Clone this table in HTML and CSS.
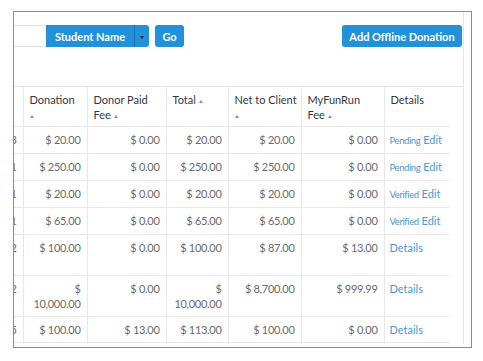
FILE: index.html
```html
<!DOCTYPE html>
<html lang="en">
<head>
    <meta charset="UTF-8">
    <title>Donations</title>
    <link rel="stylesheet" href="styles.css">
</head>
<body>
    <div class="frame">
        <div class="page">
            <div class="toolbar">
                <div class="search">
                    <input type="text" class="search-input">
                    <button class="btn btn-main">Student Name</button>
                    <button class="btn btn-caret"><span class="caret"></span></button>
                    <button class="btn btn-go">Go</button>
                </div>
                <button class="btn btn-add">Add Offline Donation</button>
            </div>
            <div class="grid-wrap">
                <table class="grid">
                    <colgroup>
                        <col style="width: 70px">
                        <col style="width: 64px">
                        <col style="width: 79px">
                        <col style="width: 62px">
                        <col style="width: 73px">
                        <col style="width: 83px">
                        <col style="width: 65px">
                    </colgroup>
                    <thead>
                        <tr>
                            <th>Date <span class="sort"></span></th>
                            <th>Donation <span class="sort"></span></th>
                            <th>Donor Paid Fee <span class="sort"></span></th>
                            <th>Total <span class="sort"></span></th>
                            <th><span class="nowrap">Net to Client</span> <span class="sort"></span></th>
                            <th>MyFunRun Fee <span class="sort"></span></th>
                            <th>Details</th>
                        </tr>
                    </thead>
                    <tbody>
                        <tr>
                            <td>3/14/2013</td>
                            <td>$ 20.00</td>
                            <td>$ 0.00</td>
                            <td>$ 20.00</td>
                            <td>$ 20.00</td>
                            <td>$ 0.00</td>
                            <td><a href="#" class="status">Pending</a> <a href="#" class="link">Edit</a></td>
                        </tr>
                        <tr>
                            <td>3/12/2011</td>
                            <td>$ 250.00</td>
                            <td>$ 0.00</td>
                            <td>$ 250.00</td>
                            <td>$ 250.00</td>
                            <td>$ 0.00</td>
                            <td><a href="#" class="status">Pending</a> <a href="#" class="link">Edit</a></td>
                        </tr>
                        <tr>
                            <td>3/11/2011</td>
                            <td>$ 20.00</td>
                            <td>$ 0.00</td>
                            <td>$ 20.00</td>
                            <td>$ 20.00</td>
                            <td>$ 0.00</td>
                            <td><a href="#" class="status">Verified</a> <a href="#" class="link">Edit</a></td>
                        </tr>
                        <tr>
                            <td>3/10/2011</td>
                            <td>$ 65.00</td>
                            <td>$ 0.00</td>
                            <td>$ 65.00</td>
                            <td>$ 65.00</td>
                            <td>$ 0.00</td>
                            <td><a href="#" class="status">Verified</a> <a href="#" class="link">Edit</a></td>
                        </tr>
                        <tr class="tall">
                            <td>2/28/2012</td>
                            <td>$ 100.00</td>
                            <td>$ 0.00</td>
                            <td>$ 100.00</td>
                            <td>$ 87.00</td>
                            <td>$ 13.00</td>
                            <td><a href="#" class="link">Details</a></td>
                        </tr>
                        <tr>
                            <td>2/21/2012</td>
                            <td>$ 10,000.00</td>
                            <td>$ 0.00</td>
                            <td>$ 10,000.00</td>
                            <td>$ 8,700.00</td>
                            <td>$ 999.99</td>
                            <td><a href="#" class="link">Details</a></td>
                        </tr>
                        <tr>
                            <td>2/15/2015</td>
                            <td>$ 100.00</td>
                            <td>$ 13.00</td>
                            <td>$ 113.00</td>
                            <td>$ 100.00</td>
                            <td>$ 0.00</td>
                            <td><a href="#" class="link">Details</a></td>
                        </tr>
                        <tr>
                            <td>2/10/2015</td>
                            <td>$ 50.00</td>
                            <td>$ 0.00</td>
                            <td>$ 50.00</td>
                            <td>$ 50.00</td>
                            <td>$ 0.00</td>
                            <td><a href="#" class="link">Details</a></td>
                        </tr>
                    </tbody>
                </table>
            </div>
        </div>
    </div>
</body>
</html>
```

FILE: styles.css
```css
body {
    margin: 0;
    background-color: white;
    font-family: Lato, "Open Sans", sans-serif;
}
.frame {
    width: 457px;
    height: 335px;
    margin: 11px 0 0 13px;
    border: 1px solid #8d8d8d;
    overflow: hidden;
}
/* page is wider than the frame, left part is cropped */
.page {
    width: 510px;
    height: 332px;
    margin-left: -61px;
    border-right: 1px solid #d9e8f3;
    overflow: hidden;
}
.toolbar {
    display: flex;
    justify-content: space-between;
    align-items: flex-start;
    padding: 13px 1px 0 0;
}
.search {
    display: flex;
}
.search-input {
    width: 93px;
    height: 22px;
    box-sizing: border-box;
    border: 1px solid #e0e0e0;
    border-right: none;
    margin: 0;
}
.btn {
    height: 22px;
    padding: 0 8px;
    background-color: #2192da;
    color: white;
    font-family: Lato, "Open Sans", sans-serif;
    font-weight: 700;
    font-size: 11px;
    border: none;
    border-radius: 3px;
    cursor: pointer;
}
.btn-main {
    width: 88px;
    border-radius: 0;
}
.btn-caret {
    width: 15px;
    padding: 0;
    border-left: 1px solid #1673b3;
    border-radius: 0 3px 3px 0;
}
.caret {
    display: inline-block;
    border-left: 2px solid transparent;
    border-right: 2px solid transparent;
    border-top: 3px solid #1c2b3c;
    vertical-align: middle;
}
.btn-go {
    width: 29px;
    padding: 0;
    margin-left: 6px;
}
.btn-add {
    width: 120px;
    padding: 0;
}
.grid-wrap {
    margin-top: 39px;
    border-top: 1px solid #e6e6e6;
}
.grid {
    width: 496px;
    table-layout: fixed;
    border-collapse: collapse;
    font-size: 11px;
}
.grid th,
.grid td {
    padding: 5px 6px;
    line-height: 15px;
    border-right: 1px solid #e8e8e8;
    border-bottom: 1px solid #e8e8e8;
    vertical-align: top;
}
.grid th:last-child,
.grid td:last-child {
    border-right: none;
}
.grid th {
    padding-bottom: 4px;
    text-align: left;
    font-weight: 400;
    color: #343844;
}
.nowrap {
    white-space: nowrap;
}
.grid td {
    text-align: right;
    color: #6a6a6a;
    letter-spacing: -0.3px;
}
.grid td:last-child {
    text-align: left;
    padding-left: 5px;
    padding-right: 0;
    letter-spacing: 0;
}
.grid .tall td {
    padding-bottom: 20px;
}
.sort {
    display: inline-block;
    border-left: 2px solid transparent;
    border-right: 2px solid transparent;
    border-bottom: 3px solid #7896b8;
    vertical-align: 1px;
}
.grid a {
    text-decoration: none;
}
.status {
    font-size: 9.5px;
    letter-spacing: -0.4px;
    color: #4f95d4;
}
.link {
    color: #4a9ad8;
}
```
